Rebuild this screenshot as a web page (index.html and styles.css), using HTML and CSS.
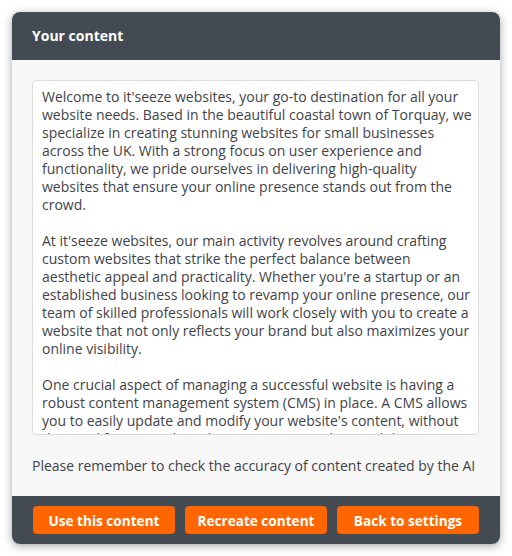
FILE: index.html
```html
<!DOCTYPE html>
<html>
<head>
<meta charset="utf-8">
<link rel="stylesheet" href="styles.css">
</head>
<body>
<div class="dialog">
  <div class="header">Your content</div>
  <div class="body">
    <div class="content">
      <p>Welcome to it'seeze websites, your go-to destination for all your website needs. Based in the beautiful coastal town of Torquay, we specialize in creating stunning websites for small businesses across the UK. With a strong focus on user experience and functionality, we pride ourselves in delivering high-quality websites that ensure your online presence stands out from the crowd.</p>
      <p>At it'seeze websites, our main activity revolves around crafting custom websites that strike the perfect balance between aesthetic appeal and practicality. Whether you're a startup or an established business looking to revamp your online presence, our team of skilled professionals will work closely with you to create a website that not only reflects your brand but also maximizes your online visibility.</p>
      <p>One crucial aspect of managing a successful website is having a robust content management system (CMS) in place. A CMS allows you to easily update and modify your website's content, without the need for any technical expertise. We understand the importance of keeping your content fresh and engaging.</p>
    </div>
    <div class="note">Please remember to check the accuracy of content created by the AI</div>
  </div>
  <div class="footer">
    <button class="btn">Use this content</button>
    <button class="btn">Recreate content</button>
    <button class="btn">Back to settings</button>
  </div>
</div>
</body>
</html>
```
FILE: styles.css
```css
html, body {
  margin: 0;
  padding: 0;
  background: #ffffff;
}
body {
  padding: 12px;
  font-family: "Open Sans", "Liberation Sans", sans-serif;
}
.dialog {
  width: 488px;
  height: 532px;
  border-radius: 8px;
  overflow: hidden;
  background: #f7f7f7;
  box-shadow: 0 2px 10px rgba(0, 0, 0, 0.35);
  display: flex;
  flex-direction: column;
}
.header {
  height: 48px;
  background: #434a52;
  color: #ffffff;
  font-weight: 700;
  font-size: 14px;
  line-height: 48px;
  padding-left: 20px;
  flex: none;
}
.body {
  flex: 1;
  padding: 20px 21px 21px 20px;
  display: flex;
  flex-direction: column;
}
.content {
  box-sizing: border-box;
  height: 355px;
  flex: none;
  border: 1px solid #dcdcdc;
  border-radius: 4px;
  background: #ffffff;
  padding: 7px 6px 0 9px;
  overflow: hidden;
  color: #3f4349;
  font-size: 14px;
  line-height: 18px;
}
.content p {
  margin: 0 0 18px 0;
}
.note {
  margin-top: 22px;
  color: #3f4349;
  font-size: 14px;
  line-height: 18px;
}
.footer {
  height: 48px;
  flex: none;
  background: #434a52;
  padding: 10px 21px 10px 21px;
  box-sizing: border-box;
  display: flex;
  gap: 10px;
}
.btn {
  flex: 1;
  height: 28px;
  border: none;
  border-radius: 4px;
  background: #ff6600;
  color: #ffffff;
  font-family: "Open Sans", "Liberation Sans", sans-serif;
  font-weight: 700;
  font-size: 13.6px;
  padding: 0;
  cursor: pointer;
}
```
